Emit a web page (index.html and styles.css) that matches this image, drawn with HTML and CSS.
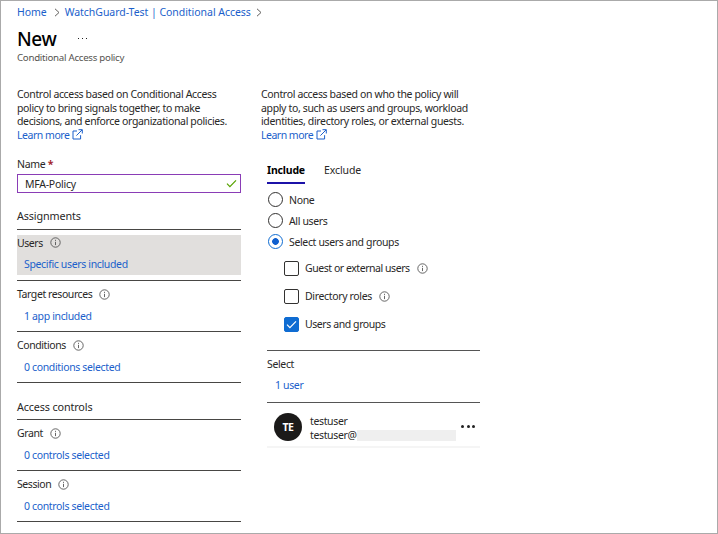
FILE: index.html
```html
<!DOCTYPE html>
<html lang="en">
<head>
<meta charset="utf-8">
<title>New - Conditional Access policy</title>
<link rel="stylesheet" href="styles.css">
</head>
<body>
<svg class="defs" width="0" height="0">
  <symbol id="info" viewBox="0 0 11 11"><circle cx="5.5" cy="5.5" r="4.7" fill="none" stroke="currentColor" stroke-width=".9"/><path d="M5.5 4.8v3.3M5.5 2.8v1.1" stroke="currentColor" stroke-width=".9"/></symbol>
  <symbol id="external" viewBox="0 0 11 11"><path d="M5 2H1v8h7.6V6.2M6.5.7h3.8v3.8M10.1.9L4.4 6.6" fill="none" stroke="currentColor" stroke-width="1"/></symbol>
  <symbol id="chevron" viewBox="0 0 6 9"><path d="M1 .8l4 3.7-4 3.7" fill="none" stroke="currentColor" stroke-width="1"/></symbol>
  <symbol id="check" viewBox="0 0 11 9"><path d="M1 4.7l2.9 3L10 1.3" fill="none" stroke="currentColor" stroke-width="1.2"/></symbol>
</svg>
<div class="page">
  <nav class="crumbs">
    <a>Home</a><svg class="chev"><use href="#chevron"/></svg><a class="crumb-long">WatchGuard-Test | Conditional Access</a><svg class="chev last"><use href="#chevron"/></svg>
  </nav>
  <header class="heading"><h1>New</h1><span class="more"><i></i><i></i><i></i></span></header>
  <div class="subtitle">Conditional Access policy</div>
  <main class="columns">
    <section class="left">
      <p class="intro">Control access based on Conditional Access<br>policy to bring signals together, to make<br>decisions, and enforce organizational policies.<br><a>Learn more<svg class="ext"><use href="#external"/></svg></a></p>
      <label class="name">Name <b>*</b></label>
      <div class="field"><span>MFA-Policy</span><svg class="valid"><use href="#check"/></svg></div>
      <h2>Assignments</h2>
      <div class="item"><div class="box selected"><div class="label">Users<svg class="info"><use href="#info"/></svg></div><a class="wide">Specific users included</a></div></div>
      <div class="item"><div class="box"><div class="label">Target resources<svg class="info"><use href="#info"/></svg></div><a>1 app included</a></div></div>
      <div class="item"><div class="box"><div class="label">Conditions<svg class="info"><use href="#info"/></svg></div><a>0 conditions selected</a></div></div>
      <h2 class="access">Access controls</h2>
      <div class="item"><div class="box"><div class="label">Grant<svg class="info"><use href="#info"/></svg></div><a>0 controls selected</a></div></div>
      <div class="item"><div class="box"><div class="label">Session<svg class="info"><use href="#info"/></svg></div><a>0 controls selected</a></div></div>
    </section>
    <section class="right">
      <p class="intro">Control access based on who the policy will<br>apply to, such as users and groups, workload<br>identities, directory roles, or external guests.<br><a>Learn more<svg class="ext"><use href="#external"/></svg></a></p>
      <div class="panel">
        <div class="tabs"><span class="tab active">Include</span><span class="tab">Exclude</span></div>
        <div class="radio"><i></i>None</div>
        <div class="radio"><i></i>All users</div>
        <div class="radio on"><i></i>Select users and groups</div>
        <div class="checks">
          <div class="check guest"><i></i>Guest or external users<svg class="info"><use href="#info"/></svg></div>
          <div class="check"><i></i>Directory roles<svg class="info"><use href="#info"/></svg></div>
          <div class="check on"><i><svg><use href="#check"/></svg></i>Users and groups</div>
        </div>
        <div class="select"><div>Select</div><a>1 user</a></div>
        <div class="user">
          <span class="avatar">TE</span>
          <div class="who"><div>testuser</div><div class="mail">testuser@<span class="redacted"></span></div></div>
          <span class="dots"><i></i><i></i><i></i></span>
        </div>
      </div>
    </section>
  </main>
</div>
</body>
</html>
```
FILE: styles.css
```css
* { box-sizing: border-box; }
body { margin: 0; background: #fff; color: #292827; font: 10.5px/16px "Noto Sans", "Open Sans", sans-serif; letter-spacing: -.35px; white-space: nowrap; }
svg { display: block; flex: none; }
.defs { position: absolute; }
a { color: #1b5fcb; }
h1, h2, p { margin: 0; font-weight: 400; }
.page { width: 718px; height: 534px; border: 1px solid #aaa; padding: 3px 0 0 16px; overflow: hidden; }
.crumbs { display: flex; align-items: center; height: 16px; letter-spacing: -.04px; }
.chev { width: 6px; height: 9px; margin: 1px 5px 0 7px; color: #605e5c; }
.chev.last { margin-left: 5px; }
.heading { display: flex; height: 26px; margin-top: 5px; }
h1 { font-size: 19px; line-height: 28px; width: 61px; color: #000; font-weight: 500; letter-spacing: -.4px; }
.more { display: flex; gap: 3px; padding-top: 13px; }
.more i { width: 1px; height: 1px; background: #222; }
.subtitle { height: 14px; line-height: 14px; font-size: 9.7px; letter-spacing: -.27px; color: #55534f; }
.columns { display: flex; gap: 20px; padding-top: 22px; }
.left { width: 224px; }
.right { width: 230px; }
.intro { line-height: 13.6px; height: 55px; padding-top: 1px; }
.intro a { letter-spacing: -.47px; }
.right .intro a { letter-spacing: -.5px; }
.ext { display: inline-block; width: 11px; height: 11px; margin-left: 3px; vertical-align: -1px; }
.name { display: block; margin-top: 14px; letter-spacing: -.3px; }
.name b { color: #a4262c; }
.field { height: 19px; margin-top: 2px; border: 1px solid #8a3db6; display: flex; align-items: center; justify-content: space-between; padding: 0 3px 0 7px; letter-spacing: -.25px; }
.valid { width: 11px; height: 9px; color: #57a300; }
h2 { font-size: 10.8px; line-height: 16px; letter-spacing: -.14px; height: 37px; padding-top: 15px; border-bottom: 1px solid #484644; }
h2.access { padding-top: 16px; }
.item { height: 51px; padding-top: 5px; border-bottom: 1px solid #484644; }
.box { height: 40px; }
.box.selected { background: #e1dfdd; }
.box.selected .label { height: 15px; }
.label { display: flex; align-items: center; height: 16px; letter-spacing: -.42px; }
.info { width: 11px; height: 11px; margin-left: 7px; color: #555; }
.box a { display: block; margin-top: 6px; padding-left: 7px; }
.panel { margin: 20px 0 0 6px; width: 213px; }
.tabs { display: flex; gap: 19px; height: 22px; line-height: 16px; letter-spacing: -.1px; }
.tab.active { font-weight: 700; color: #000; height: 22px; border-bottom: 2px solid #1c12a8; width: 38px; letter-spacing: -.18px; }
.radio, .check { display: flex; align-items: center; height: 21px; }
.tabs + .radio { margin-top: 5px; }
.radio i { width: 15px; height: 15px; border: 1px solid #323130; border-radius: 50%; margin: 0 6px 0 1px; }
.radio.on i { border-color: #0f6cd2; background: radial-gradient(circle, #0f5fcf 0 3px, transparent 3.7px); }
.checks { padding: 2px 0 0 17px; }
.check { height: 28px; }
.check.guest { letter-spacing: -.45px; }
.check.on { letter-spacing: -.42px; }
.check i { width: 15px; height: 15px; border: 1px solid #323130; border-radius: 2px; margin-right: 6px; display: flex; align-items: center; justify-content: center; }
.check.on i { background: #0f6cd2; border-color: #0f6cd2; color: #fff; }
.check i svg { width: 11px; height: 9px; }
.select { margin-top: 12px; height: 53px; border: 1px solid #555; border-width: 1px 0; padding-top: 5px; }
.select a { display: block; margin-top: 5px; padding-left: 8px; }
.user { height: 45px; display: flex; padding: 10px 4px 0 7px; border-bottom: 2px solid #f5f5f5; }
.avatar { width: 28px; height: 28px; border-radius: 50%; background: #1b1a19; color: #fff; font-weight: 700; text-align: center; line-height: 28px; }
.who { margin-left: 8px; line-height: 14px; padding-top: 1px; width: 146px; letter-spacing: -.36px; }
.mail { display: flex; justify-content: space-between; }
.redacted { width: 99px; height: 11px; margin-top: 2px; background: #efefef; }
.dots { display: flex; gap: 2.5px; padding: 12px 0 0 5px; }
.dots i { width: 3px; height: 3px; border-radius: 50%; background: #222; }
```
